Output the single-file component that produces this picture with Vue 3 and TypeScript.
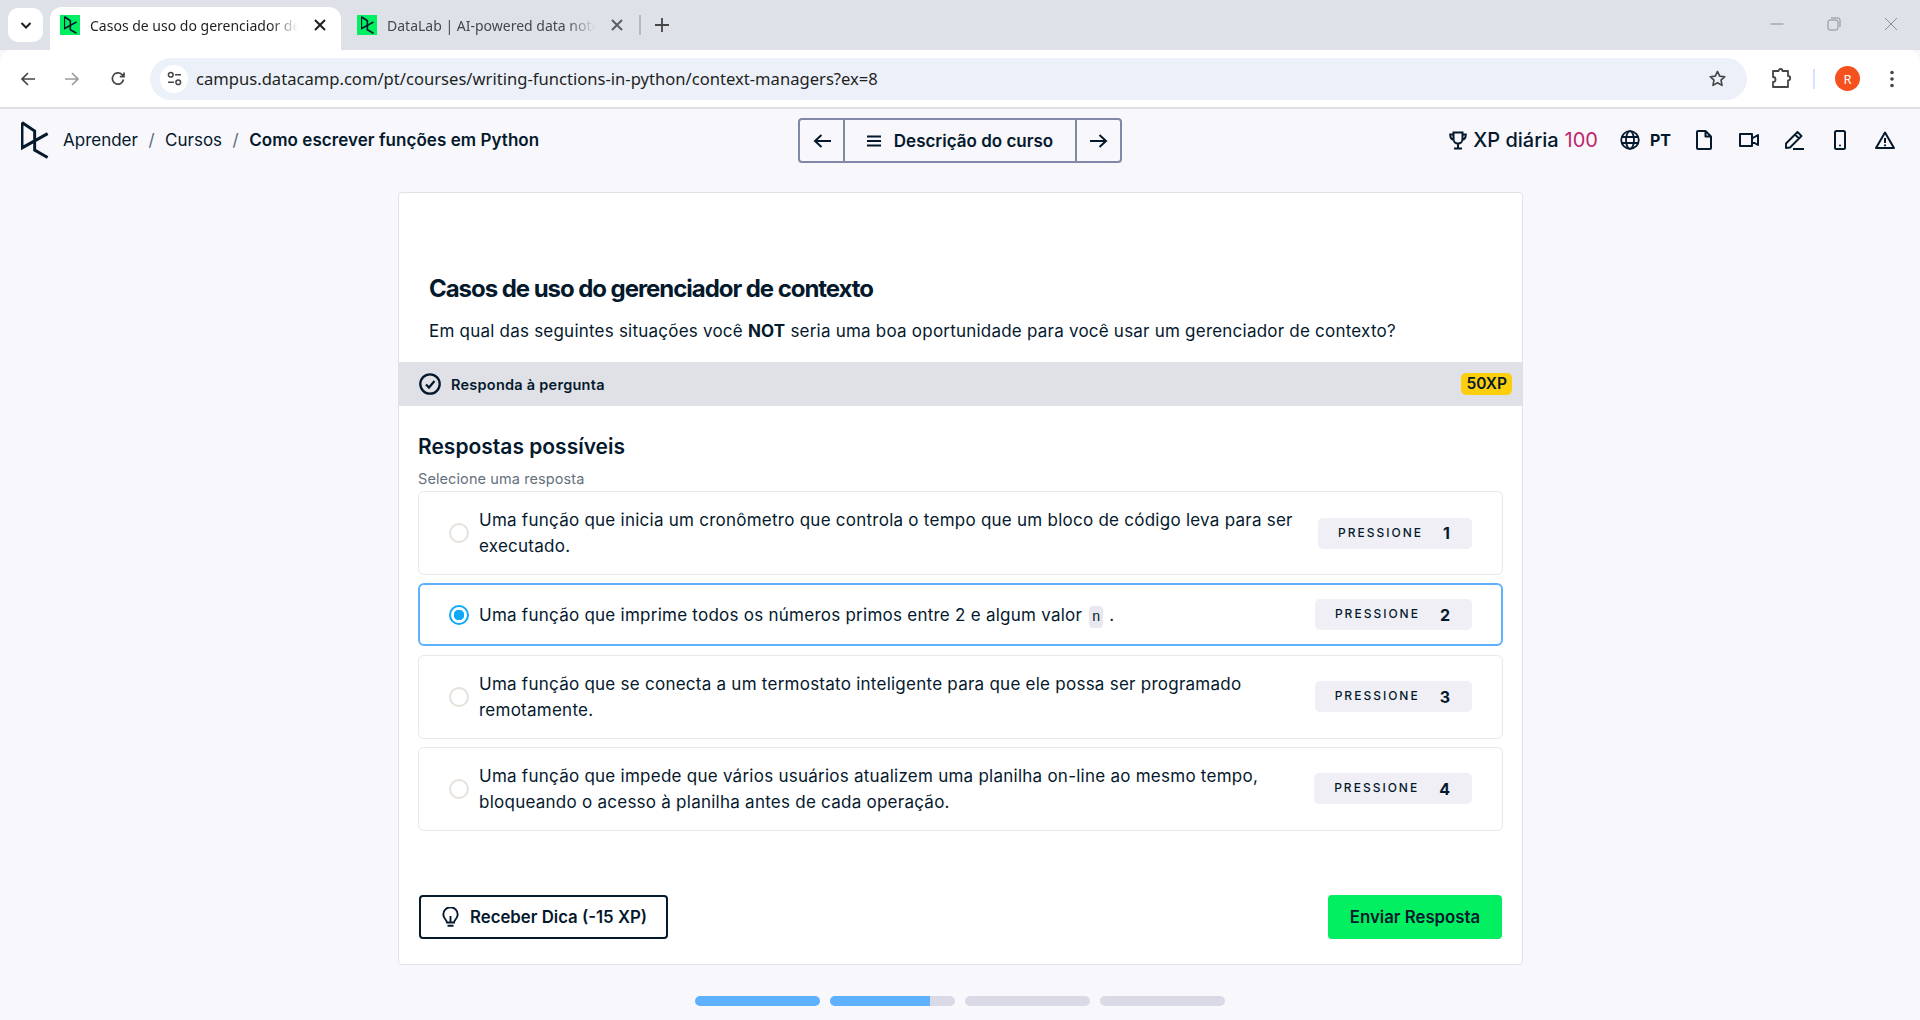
<template>
  <div class="page">
    <div class="tabstrip">
      <button class="tab-search">
        <svg width="14" height="14" viewBox="0 0 14 14"><path d="M2.5 5 7 9.5 11.5 5" fill="none" stroke="#1f1f1f" stroke-width="2" /></svg>
      </button>
      <div class="tab tab-active">
        <span class="favicon">
          <svg width="13" height="18" viewBox="8 6 26 36"><path :d="logoPath" fill="none" stroke="#05192d" stroke-width="3.2" /></svg>
        </span>
        <span class="tab-title">Casos de uso do gerenciador de contexto</span>
        <svg class="tab-x" width="18" height="18" viewBox="0 0 18 18"><path d="m4 4 10 10M14 4 4 14" stroke="#1f1f1f" stroke-width="2" /></svg>
      </div>
      <div class="tab">
        <span class="favicon">
          <svg width="13" height="18" viewBox="8 6 26 36"><path :d="logoPath" fill="none" stroke="#05192d" stroke-width="3.2" /></svg>
        </span>
        <span class="tab-title">DataLab | AI-powered data notebook</span>
        <svg class="tab-x" width="18" height="18" viewBox="0 0 18 18"><path d="m4 4 10 10M14 4 4 14" stroke="#5c5f63" stroke-width="2" /></svg>
      </div>
      <span class="tab-sep"></span>
      <span class="tab-plus">
        <svg width="14" height="14" viewBox="0 0 14 14"><path d="M7 0v14M0 7h14" stroke="#444746" stroke-width="1.8" /></svg>
      </span>
      <div class="win-controls">
        <svg width="14" height="14" viewBox="0 0 14 14"><path d="M0.500 7h13" stroke="#8a8d91" stroke-width="1" /></svg>
        <svg width="14" height="14" viewBox="0 0 14 14"><rect x="1" y="3" width="10" height="10" rx="2" fill="none" stroke="#8a8d91" /><path d="M4 1h7a2 2 0 0 1 2 2v7" fill="none" stroke="#8a8d91" /></svg>
        <svg width="14" height="14" viewBox="0 0 14 14"><path d="m1 1 12 12M13 1 1 13" stroke="#8a8d91" stroke-width="1" /></svg>
      </div>
    </div>

    <div class="toolbar">
      <svg class="nav-icon" width="16" height="16" viewBox="0 0 16 16"><path d="M15 8H2M8 2 2 8l6 6" fill="none" stroke="#444746" stroke-width="1.7" /></svg>
      <svg class="nav-icon nav-forward" width="16" height="16" viewBox="0 0 16 16"><path d="M1 8h13M8 2l6 6-6 6" fill="none" stroke="#9a9c9e" stroke-width="1.7" /></svg>
      <svg class="nav-icon nav-reload" width="16" height="16" viewBox="0 0 16 16"><path d="M13.500 8.500A5.600 5.600 0 1 1 12 3.600L14 5.600M14 1.500v4.200H9.800" fill="none" stroke="#444746" stroke-width="1.7" /></svg>
      <div class="omnibox">
        <span class="site-info">
          <svg width="15" height="15" viewBox="0 0 14 14"><circle cx="3.500" cy="3.500" r="2.200" fill="none" stroke="#444746" stroke-width="1.400" /><path d="M7.500 3.500H13M1 10.500h5.500" stroke="#444746" stroke-width="1.500" /><circle cx="10.500" cy="10.500" r="2.200" fill="none" stroke="#444746" stroke-width="1.400" /></svg>
        </span>
        <span class="url">campus.datacamp.com/pt/courses/writing-functions-in-python/context-managers?ex=8</span>
        <svg width="19" height="19" viewBox="0 0 20 20"><path d="m10 2.500 2.300 5 5.400.6-4 3.700 1.100 5.400-4.800-2.700-4.800 2.700 1.100-5.400-4-3.700 5.400-.6z" fill="none" stroke="#444746" stroke-width="1.700" stroke-linejoin="round" /></svg>
      </div>
      <svg class="ext-icon" width="22" height="21" viewBox="0 0 22 21"><path d="M2 3h5.500a2 2 0 0 1 4 0H17v5a2 2 0 0 1 0 4.500V19H2v-5a2.500 2.500 0 0 0 0-5z" fill="none" stroke="#444746" stroke-width="1.800" stroke-linejoin="round" /></svg>
      <span class="bar-sep"></span>
      <span class="avatar">R</span>
      <svg class="menu-icon" width="4" height="18" viewBox="0 0 4 18"><circle cx="2" cy="2.500" r="1.800" fill="#444746" /><circle cx="2" cy="9" r="1.800" fill="#444746" /><circle cx="2" cy="15.500" r="1.800" fill="#444746" /></svg>
    </div>

    <header class="header">
      <div class="crumbs">
        <svg class="logo" width="29" height="38" viewBox="8 6 27 36"><path :d="logoPath" fill="none" stroke="#05192d" stroke-width="2.800" /></svg>
        <a>Aprender</a>
        <span class="slash">/</span>
        <a>Cursos</a>
        <span class="slash">/</span>
        <strong>Como escrever funções em Python</strong>
      </div>

      <div class="course-nav">
        <button class="course-arrow">
          <svg width="18" height="16" viewBox="0 0 18 16"><path d="M18 8H2M8.500 2 2 8l6.500 6" fill="none" stroke="#05192d" stroke-width="2" /></svg>
        </button>
        <button class="course-outline">
          <svg width="14" height="12" viewBox="0 0 14 12"><path d="M0 1.500h14M0 6h14M0 10.500h14" stroke="#05192d" stroke-width="1.800" /></svg>
          Descrição do curso
        </button>
        <button class="course-arrow">
          <svg width="18" height="16" viewBox="0 0 18 16"><path d="M0 8h16M9.500 2 16 8l-6.500 6" fill="none" stroke="#05192d" stroke-width="2" /></svg>
        </button>
      </div>

      <div class="tools">
        <div class="xp">
          <svg width="18" height="19" viewBox="0 0 18 19"><path d="M4.500 1.500h9V8a4.500 4.500 0 0 1-9 0zM4.500 3.500H1.200c0 3 1.300 5 3.800 5.500M13.500 3.500h3.300c0 3-1.300 5-3.800 5.500M9 12.500v4M5 17.500h8" fill="none" stroke="#05192d" stroke-width="2" /></svg>
          <span>XP diária</span>
          <span class="xp-value">100</span>
        </div>
        <div class="lang">
          <svg width="20" height="20" viewBox="0 0 20 20"><g fill="none" stroke="#05192d" stroke-width="1.800"><circle cx="10" cy="10" r="8.800" /><ellipse cx="10" cy="10" rx="4" ry="8.800" /><path d="M1.500 7h17M1.500 13h17" /></g></svg>
          <span>PT</span>
        </div>
        <svg class="tool-file" width="16" height="20" viewBox="0 0 16 20"><path d="M1 2a1 1 0 0 1 1-1h7.500L15 6.500V18a1 1 0 0 1-1 1H2a1 1 0 0 1-1-1zM9.500 1v5.500H15" fill="none" stroke="#05192d" stroke-width="2" stroke-linejoin="round" /></svg>
        <svg class="tool-video" width="20" height="14" viewBox="0 0 20 14"><path d="M1 1h12v12H1zM13 5.500 19 2v10l-6-3.500" fill="none" stroke="#05192d" stroke-width="2" stroke-linejoin="round" /></svg>
        <svg class="tool-pen" width="20" height="20" viewBox="0 0 20 20"><path d="M2 18v-4.500L13.500 2l4 4L6 17.500zM11 4.500l4 4M9 19h11" fill="none" stroke="#05192d" stroke-width="1.900" stroke-linejoin="round" /></svg>
        <svg class="tool-phone" width="12" height="20" viewBox="0 0 12 20"><rect x="1" y="1" width="10" height="18" rx="1.500" fill="none" stroke="#05192d" stroke-width="2" /><circle cx="6" cy="15.500" r="1" fill="#05192d" /></svg>
        <svg class="tool-warn" width="20" height="18" viewBox="0 0 20 18"><path d="M10 1.500 19 17H1zM10 7v5" fill="none" stroke="#05192d" stroke-width="2" stroke-linejoin="round" /><circle cx="10" cy="14.300" r="1.100" fill="#05192d" /></svg>
      </div>
    </header>

    <main class="main">
      <section class="card">
        <div class="intro">
          <h1>Casos de uso do gerenciador de contexto</h1>
          <p>Em qual das seguintes situações você <b>NOT</b> seria uma boa oportunidade para você usar um gerenciador de contexto?</p>
        </div>

        <div class="task-bar">
          <svg width="22" height="22" viewBox="0 0 22 22"><circle cx="11" cy="11" r="9.700" fill="none" stroke="#05192d" stroke-width="2.300" /><path d="m7 11.500 3 3 5.500-6.500" fill="none" stroke="#05192d" stroke-width="2.300" /></svg>
          <span class="task-label">Responda à pergunta</span>
          <span class="xp-badge">50XP</span>
        </div>

        <div class="answers">
          <h2>Respostas possíveis</h2>
          <div class="hint">Selecione uma resposta</div>

          <div class="options">
            <div v-for="opt in options" :key="opt.key" class="option" :class="{ selected: opt.key === selected }">
              <span class="radio"></span>
              <div class="option-text">
                {{ opt.text }}<template v-if="opt.code"><code>{{ opt.code }}</code>.</template>
              </div>
              <div class="press">
                <span class="press-label">PRESSIONE</span>
                <span class="press-key">{{ opt.key }}</span>
              </div>
            </div>
          </div>
        </div>

        <div class="actions">
          <button class="hint-btn">
            <svg width="17" height="20" viewBox="0 0 17 20"><path d="M5 15.500C5 13 1.300 11.500 1.300 7.500a7.200 7.200 0 0 1 14.400 0c0 4-3.700 5.500-3.700 8zM5.500 18.800h6M8.500 15V9" fill="none" stroke="#05192d" stroke-width="1.900" /></svg>
            Receber Dica (-15 XP)
          </button>
          <button class="submit-btn">Enviar Resposta</button>
        </div>
      </section>

      <div class="progress">
        <span v-for="(p, i) in progress" :key="i" class="track">
          <span class="fill" :style="{ width: p + '%' }"></span>
        </span>
      </div>
    </main>
  </div>
</template>

<script setup lang="ts">
interface AnswerOption {
  key: number;
  text: string;
  code?: string;
}

const logoPath = "M8.700 7.500V31.500L33 18M8.700 7.500 20.700 15.500V33.500L33 40.500";

const selected = 2;

const options: AnswerOption[] = [
  { key: 1, text: "Uma função que inicia um cronômetro que controla o tempo que um bloco de código leva para ser executado." },
  { key: 2, text: "Uma função que imprime todos os números primos entre 2 e algum valor", code: "n" },
  { key: 3, text: "Uma função que se conecta a um termostato inteligente para que ele possa ser programado remotamente." },
  { key: 4, text: "Uma função que impede que vários usuários atualizem uma planilha on-line ao mesmo tempo, bloqueando o acesso à planilha antes de cada operação." },
];

const progress = [100, 80, 0, 0];
</script>

<style>
html,
body {
  margin: 0;
  background: #f7f7fc;
}
</style>

<style scoped>
.page {
  width: 1920px;
  height: 1020px;
  overflow: hidden;
  display: flex;
  flex-direction: column;
  background: #f7f7fc;
  color: #05192d;
  font-family: "Inter", "Noto Sans", sans-serif;
}

button {
  font-family: inherit;
  cursor: pointer;
}

.tabstrip {
  height: 50px;
  flex: none;
  display: flex;
  align-items: flex-start;
  background: #dee1e7;
  font-family: "Noto Sans", sans-serif;
  font-size: 14px;
}

.tab-search {
  width: 35px;
  height: 34px;
  margin: 8px 0 0 8px;
  padding: 0;
  border: 0;
  border-radius: 10px;
  background: #fff;
  display: flex;
  align-items: center;
  justify-content: center;
}

.tab {
  width: 294px;
  height: 43px;
  margin-top: 7px;
  box-sizing: border-box;
  padding: 0 9px 7px 16px;
  display: flex;
  align-items: center;
  color: #45484c;
}

.tab-active {
  width: 291px;
  margin-left: 7px;
  padding: 0 12px 7px 10px;
  background: #fff;
  border-radius: 12px 12px 0 0;
  color: #1f1f1f;
}

.favicon {
  width: 20px;
  height: 20px;
  flex: none;
  background: #03ef62;
  display: flex;
  align-items: center;
  justify-content: center;
  margin-right: 10px;
}

.tab-title {
  flex: 1;
  min-width: 0;
  overflow: hidden;
  white-space: nowrap;
  -webkit-mask-image: linear-gradient(90deg, #000 85%, transparent 98%);
  mask-image: linear-gradient(90deg, #000 85%, transparent 98%);
}

.tab-x {
  margin-left: 9px;
  flex: none;
}

.tab-sep {
  width: 2px;
  height: 20px;
  margin: 15px 0 0 4px;
  background: #b5b8bd;
}

.tab-plus {
  margin: 18px 0 0 14px;
  height: 14px;
  display: flex;
}

.win-controls {
  margin-left: auto;
  margin-top: 17px;
  display: flex;
  gap: 43px;
  padding-right: 22px;
}

.toolbar {
  height: 59px;
  flex: none;
  box-sizing: border-box;
  border-radius: 12px 12px 0 0;
  background: #fff;
  border-bottom: 2px solid #e0e0e0;
  display: flex;
  align-items: center;
  padding-left: 20px;
}

.nav-icon {
  margin-right: 28px;
  flex: none;
}

.nav-forward {
  margin-right: 30px;
}

.nav-reload {
  margin-right: 24px;
}

.omnibox {
  width: 1597px;
  height: 42px;
  flex: none;
  box-sizing: border-box;
  padding: 0 20px 0 10px;
  border-radius: 21px;
  background: #ecf1f9;
  display: flex;
  align-items: center;
  font-family: "Noto Sans", sans-serif;
  font-size: 16.600px;
  color: #1f1f1f;
}

.site-info {
  width: 28px;
  height: 28px;
  border-radius: 50%;
  background: #fff;
  display: flex;
  align-items: center;
  justify-content: center;
  flex: none;
}

.url {
  margin-left: 8px;
  flex: 1;
  white-space: nowrap;
}

.ext-icon {
  margin-left: 24px;
  flex: none;
}

.bar-sep {
  width: 2px;
  height: 20px;
  margin-left: 20px;
  flex: none;
  background: #d3e3fd;
}

.avatar {
  width: 25px;
  height: 25px;
  margin-left: 20px;
  flex: none;
  border-radius: 50%;
  background: #f4511e;
  color: #fff;
  font-family: "Noto Sans", sans-serif;
  font-size: 13px;
  display: flex;
  align-items: center;
  justify-content: center;
}

.menu-icon {
  margin-left: 30px;
  flex: none;
}

.header {
  height: 83px;
  flex: none;
  box-sizing: border-box;
  display: grid;
  grid-template-columns: 1fr 324px 1fr;
  align-items: start;
  padding: 9px 25px 0;
}

.crumbs {
  display: flex;
  align-items: center;
  height: 43px;
  margin-left: -4px;
  font-size: 17px;
  gap: 10.500px;
  white-space: nowrap;
}

.logo {
  margin-right: 2.500px;
  flex: none;
}

.slash {
  color: #5d6a77;
}

.crumbs strong {
  font-weight: 600;
  letter-spacing: 0.05px;
}

.course-nav {
  height: 45px;
  box-sizing: border-box;
  display: flex;
  border: 2px solid #8288a8;
  border-radius: 4px;
}

.course-arrow {
  width: 43px;
  flex: none;
  border: 0;
  padding: 0;
  background: transparent;
  display: flex;
  align-items: center;
  justify-content: center;
}

.course-outline {
  flex: 1;
  border: solid #8288a8;
  border-width: 0 2px;
  background: transparent;
  display: flex;
  align-items: center;
  justify-content: center;
  gap: 13px;
  font-size: 17px;
  font-weight: 600;
  color: #05192d;
  white-space: nowrap;
}

.tools {
  height: 44px;
  display: flex;
  align-items: center;
  justify-content: flex-end;
}

.xp {
  display: flex;
  align-items: center;
  gap: 6px;
  font-size: 20px;
  font-weight: 500;
  white-space: nowrap;
}

.xp-value {
  color: #c0256c;
  font-weight: 400;
}

.lang {
  display: flex;
  align-items: center;
  gap: 10px;
  font-size: 16px;
  font-weight: 700;
  margin-left: 22px;
}

.tool-file {
  margin-left: 25px;
}

.tool-video {
  margin-left: 27px;
}

.tool-pen {
  margin-left: 25px;
}

.tool-phone {
  margin-left: 30px;
}

.tool-warn {
  margin-left: 29px;
}

.main {
  flex: 1;
  display: flex;
  flex-direction: column;
  align-items: center;
}

.card {
  width: 1125px;
  height: 773px;
  margin-left: 1px;
  flex: none;
  box-sizing: border-box;
  background: #fff;
  border: 1px solid #e1e1e8;
  border-radius: 4px;
  display: flex;
  flex-direction: column;
}

.intro {
  height: 169px;
  flex: none;
  box-sizing: border-box;
  padding: 81px 30px 0;
}

h1 {
  margin: 0;
  font-size: 24px;
  line-height: 30px;
  font-weight: 700;
  letter-spacing: -1.05px;
}

.intro p {
  margin: 15px 0 0;
  font-size: 17px;
  line-height: 24px;
  letter-spacing: 0.22px;
}

.intro p b {
  font-weight: 700;
}

.task-bar {
  height: 44px;
  flex: none;
  box-sizing: border-box;
  padding: 0 10px 0 20px;
  background: #e0e1e6;
  display: flex;
  align-items: center;
  gap: 10px;
}

.task-label {
  flex: 1;
  font-size: 14.500px;
  font-weight: 600;
  letter-spacing: 0.25px;
}

.xp-badge {
  padding: 2px 5px;
  border-radius: 5px;
  background: #fcce0d;
  font-size: 15.500px;
  line-height: 18px;
  font-weight: 600;
}

.answers {
  padding: 26px 19px 0;
}

h2 {
  margin: 0;
  font-size: 21px;
  line-height: 30px;
  font-weight: 600;
}

.hint {
  margin-top: 7px;
  font-size: 14.500px;
  line-height: 20px;
  letter-spacing: 0.1px;
  color: #65707c;
}

.options {
  margin-top: 2px;
  display: flex;
  flex-direction: column;
  gap: 8.330px;
}

.option {
  height: 84px;
  box-sizing: border-box;
  padding: 0 30px;
  background: #fff;
  border: 1px solid #e8e8ee;
  border-radius: 6px;
  display: flex;
  align-items: center;
}

.option.selected {
  height: 63px;
  padding: 0 29px;
  border: 2px solid #5eb1ff;
}

.radio {
  width: 20px;
  height: 20px;
  flex: none;
  box-sizing: border-box;
  border: 2.500px solid #e5e1da;
  border-radius: 50%;
  background: #fff;
  margin-right: 10px;
}

.selected .radio {
  border: 2.500px solid #0ea9f8;
  background: radial-gradient(circle, #0ea9f8 0 5px, #fff 5.500px);
}

.option-text {
  flex: 1;
  min-width: 0;
  font-size: 17px;
  line-height: 26px;
  letter-spacing: 0.25px;
  margin-right: 12px;
}

code {
  display: inline-block;
  width: 14px;
  height: 22px;
  margin: 0 6px 0 7px;
  border-radius: 4px;
  background: #e8e8f0;
  font-family: "Liberation Mono", monospace;
  font-size: 14px;
  line-height: 22px;
  letter-spacing: 0;
  text-align: center;
}

.press {
  height: 31px;
  flex: none;
  box-sizing: border-box;
  padding: 0 22px 0 20px;
  border-radius: 5px;
  background: #efeff5;
  display: flex;
  align-items: center;
}

.press-label {
  font-size: 12px;
  font-weight: 500;
  letter-spacing: 2px;
  margin-top: -2px;
}

.press-key {
  margin-left: 20px;
  font-size: 16px;
  font-weight: 700;
}

.actions {
  margin-top: auto;
  padding: 0 20px 25px;
  display: flex;
  justify-content: space-between;
}

.hint-btn,
.submit-btn {
  height: 44px;
  border-radius: 4px;
  font-size: 16.800px;
  font-weight: 600;
  color: #05192d;
  display: flex;
  align-items: center;
}

.hint-btn {
  width: 249px;
  box-sizing: border-box;
  padding: 0 0 0 21px;
  gap: 11px;
  background: #fff;
  border: 2px solid #05192d;
}

.submit-btn {
  width: 174px;
  justify-content: center;
  border: 0;
  background: #03ef62;
}

.progress {
  margin-top: 31px;
  display: flex;
  gap: 10px;
}

.track {
  width: 125px;
  height: 10px;
  border-radius: 5px;
  overflow: hidden;
  background: #dadae6;
}

.fill {
  display: block;
  height: 100%;
  background: #5eb1ff;
}
</style>
